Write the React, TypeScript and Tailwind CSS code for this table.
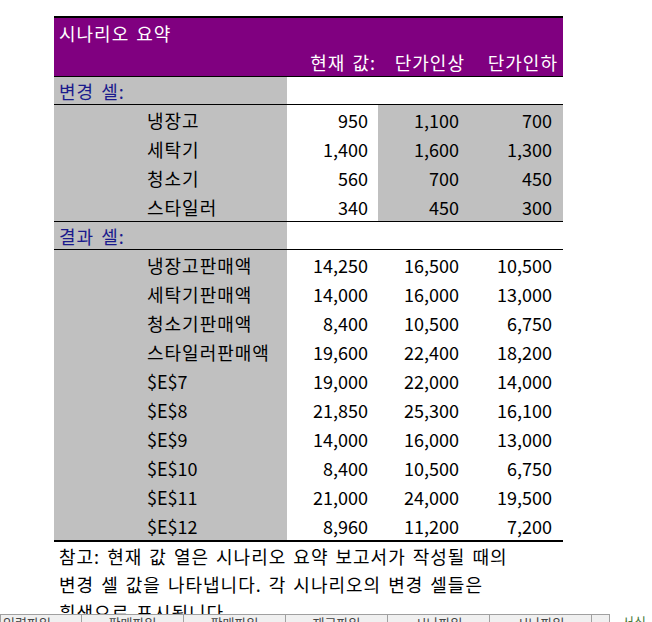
import React from "react"

// ─── Types ──────────────────────────────────────────────────────────────────
type Row = { label: string; values: [string, string, string] }

// ─── Data ───────────────────────────────────────────────────────────────────
const changingCells: Row[] = [
    { label: "냉장고", values: ["950", "1,100", "700"] },
    { label: "세탁기", values: ["1,400", "1,600", "1,300"] },
    { label: "청소기", values: ["560", "700", "450"] },
    { label: "스타일러", values: ["340", "450", "300"] },
]

const resultCells: Row[] = [
    { label: "냉장고판매액", values: ["14,250", "16,500", "10,500"] },
    { label: "세탁기판매액", values: ["14,000", "16,000", "13,000"] },
    { label: "청소기판매액", values: ["8,400", "10,500", "6,750"] },
    { label: "스타일러판매액", values: ["19,600", "22,400", "18,200"] },
    { label: "$E$7", values: ["19,000", "22,000", "14,000"] },
    { label: "$E$8", values: ["21,850", "25,300", "16,100"] },
    { label: "$E$9", values: ["14,000", "16,000", "13,000"] },
    { label: "$E$10", values: ["8,400", "10,500", "6,750"] },
    { label: "$E$11", values: ["21,000", "24,000", "19,500"] },
    { label: "$E$12", values: ["8,960", "11,200", "7,200"] },
]

const notes = [
    "참고: 현재 값 열은 시나리오 요약 보고서가 작성될 때의",
    "변경 셀 값을 나타냅니다. 각 시나리오의 변경 셀들은",
    "흰색으로 표시됩니다.",
]

const tabs = ["입력파일", "판매파일", "판매파일", "재고파일", "시나파일", "시나파일"]

const grid = "grid grid-cols-[233px_91px_92px_93px]"
// Hangul in the sheet font runs wider than Noto's, so open it up a little
const hangul = "tracking-[1px] [word-spacing:2px]"

// ─── Rows ───────────────────────────────────────────────────────────────────
function DataRow({ row, shadeScenarios }: { row: Row; shadeScenarios: boolean }) {
    const shade = shadeScenarios ? "bg-[#c0c0c0]" : "bg-white"
    const isRef = row.label.startsWith("$")
    return (
        <div className={`${grid} h-[29px] items-center`}>
            <div className={`h-full bg-[#c0c0c0] pl-[93px] flex items-center ${isRef ? "" : hangul}`}>{row.label}</div>
            <div className="h-full bg-white pr-[10px] flex items-center justify-end">{row.values[0]}</div>
            <div className={`h-full ${shade} pr-[11px] flex items-center justify-end`}>{row.values[1]}</div>
            <div className={`h-full ${shade} pr-[11px] flex items-center justify-end`}>{row.values[2]}</div>
        </div>
    )
}

function SectionRow({ title }: { title: string }) {
    return (
        <div className={`${grid} h-[28px] border-b border-black`}>
            <div className={`bg-[#c0c0c0] pl-[5px] flex items-center text-[#1a1a8c] ${hangul}`}>{title}</div>
            <div className="col-span-3 bg-white" />
        </div>
    )
}

// ─── Main ───────────────────────────────────────────────────────────────────
export default function App() {
    return (
        <div
            className="relative h-[622px] w-[652px] overflow-hidden bg-white text-[18px] leading-none text-black"
            style={{ fontFamily: '"Noto Sans CJK KR", "Noto Sans", sans-serif' }}
        >
            <div className="ml-[54px] pt-4 w-[509px]">
                {/* header */}
                <div className={`border-t-2 border-b border-black bg-[#800080] text-white ${hangul}`}>
                    <div className="h-[29px] pl-[5px] flex items-center">시나리오 요약</div>
                    <div className={`${grid} h-[29px] items-center`}>
                        <div />
                        <div className="text-right pr-[2px]">현재 값:</div>
                        <div className="text-right pr-[5px]">단가인상</div>
                        <div className="text-right pr-[5px]">단가인하</div>
                    </div>
                </div>

                <SectionRow title="변경 셀:" />
                <div className="border-b border-black">
                    {changingCells.map((r) => (
                        <DataRow key={r.label} row={r} shadeScenarios />
                    ))}
                </div>

                <SectionRow title="결과 셀:" />
                <div className="border-b-2 border-black">
                    {resultCells.map((r) => (
                        <DataRow key={r.label} row={r} shadeScenarios={false} />
                    ))}
                </div>

                <div className={`pl-[5px] ${hangul}`}>
                    {notes.map((n) => (
                        <div key={n} className="h-[28px] flex items-center whitespace-nowrap">{n}</div>
                    ))}
                </div>
            </div>

            {/* sheet tab bar, lies over the last note line */}
            <div className="absolute left-0 top-[614px] flex h-[8px] w-full items-start overflow-hidden bg-white">
                <div className="flex h-[30px] w-[610px] border border-[#a0a0a0] bg-[#f0f0f0] text-[13px] text-[#444]">
                    {tabs.map((t, i) => (
                        <div
                            key={i}
                            className="flex w-[102px] items-start justify-center border-r border-[#a0a0a0] pt-[1px] first:w-[81px] first:justify-start first:pl-[2px]"
                        >
                            {t}
                        </div>
                    ))}
                </div>
                <div className="pl-[12px] pt-[1px] text-[13px] text-[#4a7a3a]">서식</div>
            </div>
        </div>
    )
}
